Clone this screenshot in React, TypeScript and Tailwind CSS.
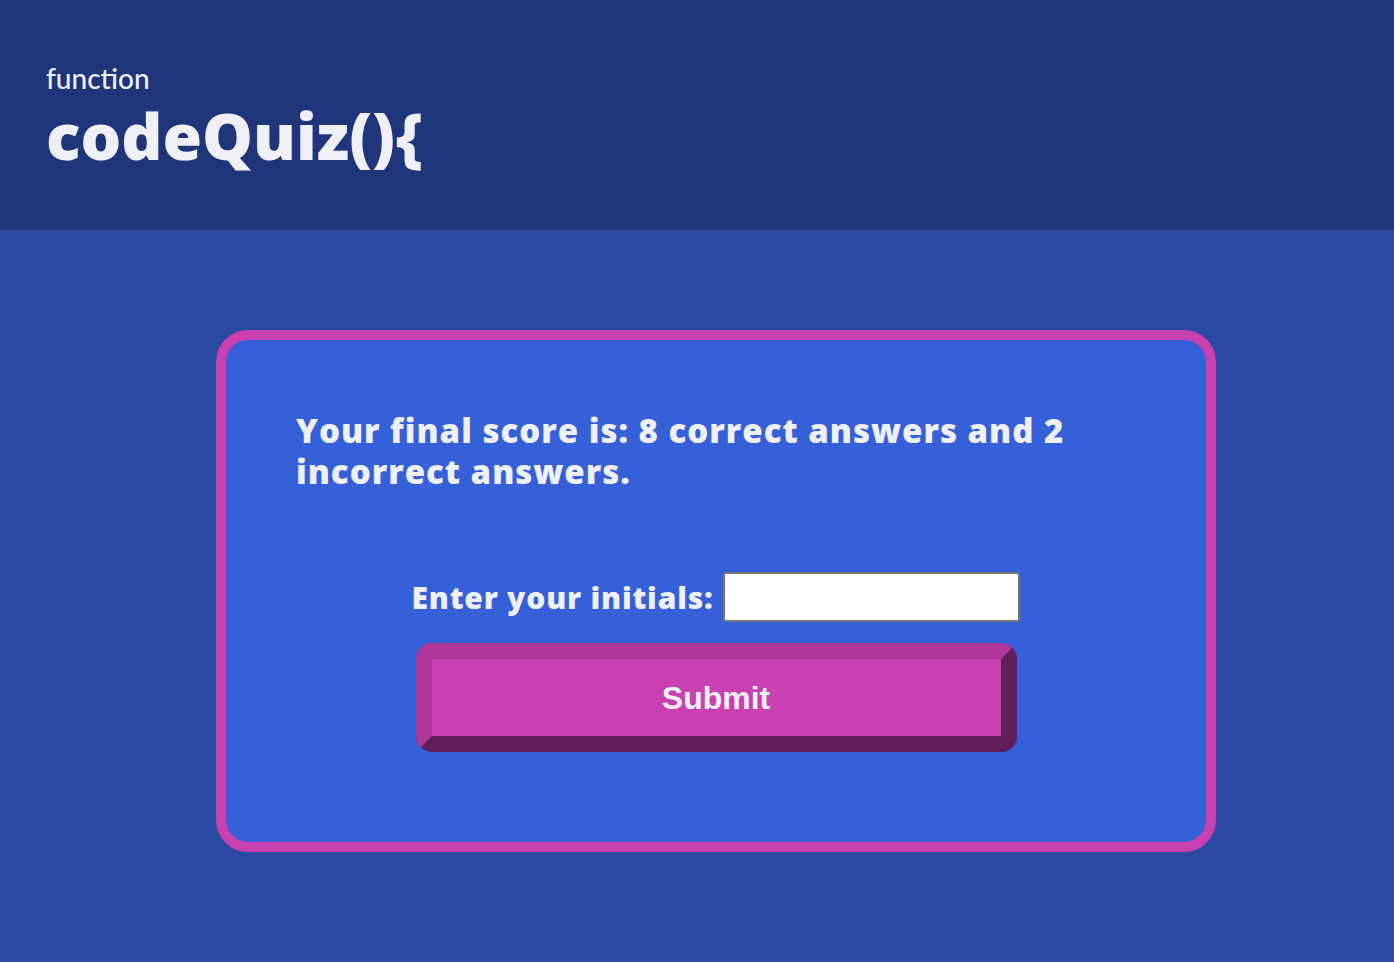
import React from 'react';

export default function App() {
  return (
    <div className="min-h-[962px] bg-[#2a49a1] font-['Open_Sans','Lato',sans-serif] text-[#eef0f6]">
      <header className="h-[230px] bg-[#1f3579] px-[46px] pt-[60px]">
        <p className="font-['Lato',sans-serif] text-[28px] leading-[36px] font-medium">function</p>
        <h1 className="mt-[8px] text-[64px] leading-none font-extrabold">codeQuiz(){'{'}</h1>
      </header>

      <main className="pt-[100px]">
        <div className="ml-[216px] w-[1000px] rounded-[32px] border-[10px] border-[#c940b0] bg-[#3560d8] pl-[70px] pr-[100px] pt-[70px] pb-[90px]">
          <p className="text-[33px] leading-[41px] font-extrabold tracking-[1px]">
            Your final score is: 8 correct answers and 2 incorrect answers.
          </p>

          <div className="mt-[80px] ml-[30px] flex flex-col items-center">
            <div className="flex items-center gap-[10px]">
              <label className="text-[30px] font-extrabold tracking-[0.8px]">Enter your initials:</label>
              <input
                type="text"
                className="h-[50px] w-[297px] rounded-[3px] border-2 border-[#767676] bg-white px-2 text-black"
              />
            </div>
            <button className="mt-[21px] h-[109px] w-[601px] rounded-[16px] border-[16px] border-t-[#b0379a] border-l-[#b0379a] border-r-[#621e5c] border-b-[#621e5c] bg-[#c940b0] font-['Liberation_Sans',Arial,sans-serif] text-[32px] font-bold text-[#eef0f6]">
              Submit
            </button>
          </div>
        </div>
      </main>
    </div>
  );
}
